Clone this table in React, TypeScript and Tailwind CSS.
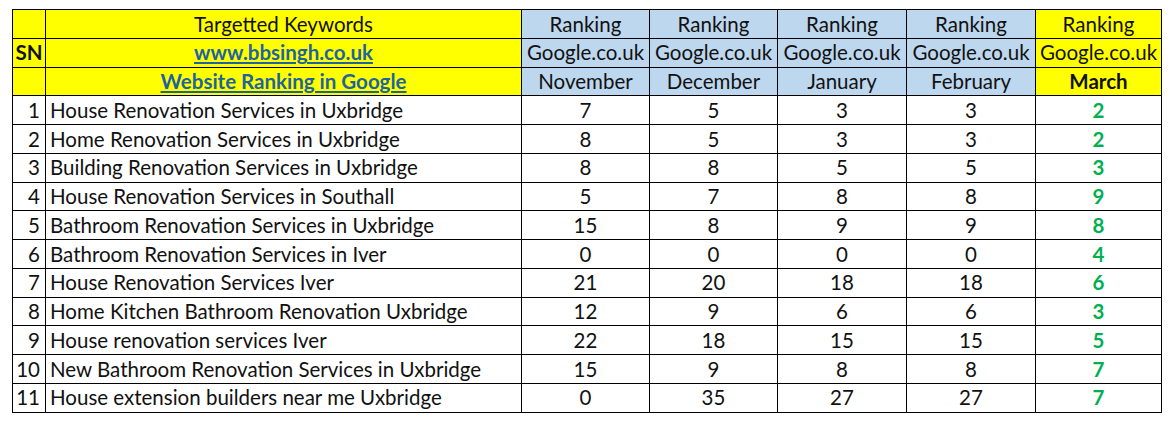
const rows: [string, number, number, number, number, number][] = [
  ["House Renovation Services in Uxbridge", 7, 5, 3, 3, 2],
  ["Home Renovation Services in Uxbridge", 8, 5, 3, 3, 2],
  ["Building Renovation Services in Uxbridge", 8, 8, 5, 5, 3],
  ["House Renovation Services in Southall", 5, 7, 8, 8, 9],
  ["Bathroom Renovation Services in Uxbridge", 15, 8, 9, 9, 8],
  ["Bathroom Renovation Services in Iver", 0, 0, 0, 0, 4],
  ["House Renovation Services Iver", 21, 20, 18, 18, 6],
  ["Home Kitchen Bathroom Renovation Uxbridge", 12, 9, 6, 6, 3],
  ["House renovation services Iver", 22, 18, 15, 15, 5],
  ["New Bathroom Renovation Services in Uxbridge", 15, 9, 8, 8, 7],
  ["House extension builders near me Uxbridge", 0, 35, 27, 27, 7],
];

const months = ["November", "December", "January", "February"];

const cell = "border border-black h-[28.75px] p-0 leading-none";

export default function App() {
  return (
    <div className="w-[1170px] h-[422px] bg-white pt-[9px] pl-[12px] font-['Lato','Open_Sans',sans-serif] text-[20.5px] text-[#111]">
      <table className="border-collapse table-fixed w-[1149px]">
        <colgroup>
          <col className="w-[33px]" />
          <col className="w-[476px]" />
          <col className="w-[128px]" />
          <col className="w-[128px]" />
          <col className="w-[129px]" />
          <col className="w-[129px]" />
          <col className="w-[126px]" />
        </colgroup>
        <thead>
          <tr>
            <td className={`${cell} bg-[#ffff00]`}></td>
            <td className={`${cell} bg-[#ffff00] text-center`}>Targetted Keywords</td>
            {months.map((m) => (
              <td key={m} className={`${cell} bg-[#bdd7ee] text-center`}>Ranking</td>
            ))}
            <td className={`${cell} bg-[#ffff00] text-center`}>Ranking</td>
          </tr>
          <tr>
            <td className={`${cell} bg-[#ffff00] font-bold text-center`}>SN</td>
            <td className={`${cell} bg-[#ffff00] text-center font-bold text-[#1d64a0]`}>
              <span className="underline underline-offset-2">www.bbsingh.co.uk</span>
            </td>
            {months.map((m) => (
              <td key={m} className={`${cell} bg-[#bdd7ee] text-center`}>Google.co.uk</td>
            ))}
            <td className={`${cell} bg-[#ffff00] text-center`}>Google.co.uk</td>
          </tr>
          <tr>
            <td className={`${cell} bg-[#ffff00]`}></td>
            <td className={`${cell} bg-[#ffff00] text-center font-bold text-[#1d64a0]`}>
              <span className="underline underline-offset-2">Website Ranking in Google</span>
            </td>
            {months.map((m) => (
              <td key={m} className={`${cell} bg-[#bdd7ee] text-center`}>{m}</td>
            ))}
            <td className={`${cell} bg-[#ffff00] text-center font-bold`}>March</td>
          </tr>
        </thead>
        <tbody>
          {rows.map(([kw, nov, dec, jan, feb, mar], i) => (
            <tr key={kw}>
              <td className={`${cell} text-right pr-[5px]`}>{i + 1}</td>
              <td className={`${cell} pl-[4px]`}>{kw}</td>
              <td className={`${cell} text-center`}>{nov}</td>
              <td className={`${cell} text-center`}>{dec}</td>
              <td className={`${cell} text-center`}>{jan}</td>
              <td className={`${cell} text-center`}>{feb}</td>
              <td className={`${cell} text-center font-bold text-[#00b050]`}>{mar}</td>
            </tr>
          ))}
        </tbody>
      </table>
    </div>
  );
}
